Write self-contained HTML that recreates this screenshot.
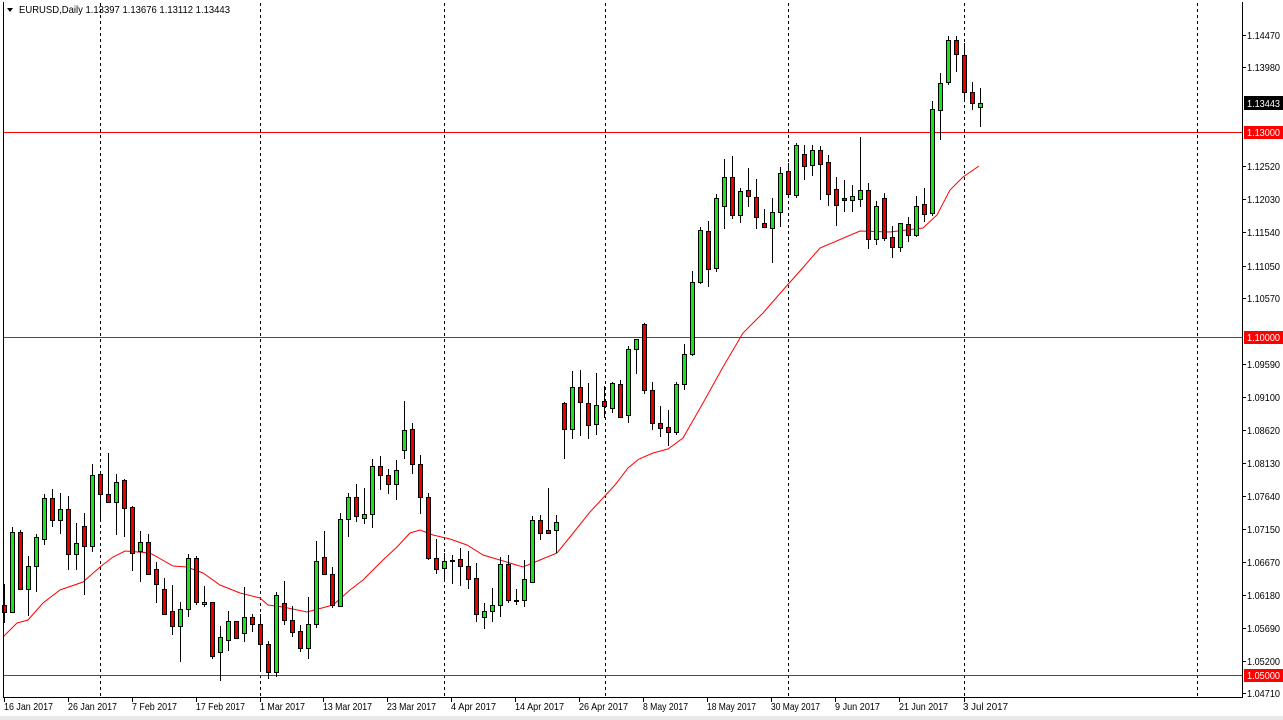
<!DOCTYPE html>
<html><head><meta charset="utf-8">
<style>
html,body{margin:0;padding:0;background:#fff;width:1283px;height:720px;overflow:hidden}
svg{display:block}
text{font-family:"Liberation Sans",sans-serif;font-size:10.5px;fill:#000}
</style></head><body>
<svg id="s" width="1283" height="720" xmlns="http://www.w3.org/2000/svg">
<rect x="0" y="0" width="1283" height="720" fill="#fff"/>
<rect x="0" y="716" width="1283" height="4" fill="#e8e8e8"/>
<g id="grid" stroke="#000" stroke-width="1" stroke-dasharray="3,3">
<line x1="100.5" y1="3" x2="100.5" y2="697"/>
<line x1="260.5" y1="3" x2="260.5" y2="697"/>
<line x1="444.5" y1="3" x2="444.5" y2="697"/>
<line x1="605.5" y1="3" x2="605.5" y2="697"/>
<line x1="788.5" y1="3" x2="788.5" y2="697"/>
<line x1="964.5" y1="3" x2="964.5" y2="697"/>
<line x1="1197.5" y1="3" x2="1197.5" y2="697"/>
</g>
<g stroke="#f00" stroke-width="1">
<line x1="3" y1="132.5" x2="1242" y2="132.5"/>
<line x1="3" y1="337.5" x2="1242" y2="337.5"/>
<line x1="3" y1="675.5" x2="1242" y2="675.5"/>
</g>
<polyline fill="none" stroke="#f00" stroke-width="1" points="3,637 17,623 28,620 43,603 60,590 83,582 100,567 113,557 125,551 150,553 173,566 187,567 203,573 220,585 240,593 260,598 268,605 283,607 307,612 333,605 350,590 363,580 383,560 397,547 410,533 420,530 433,535 450,539 467,545 483,555 500,560 523,567 540,560 557,553 570,537 590,512 615,485 628,468 639,459 653,453 668,449 683,438 703,403 723,367 743,333 763,313 783,290 800,271 820,248 860,231 890,232 923,228 937,215 950,190 963,177 979,166"/>
<g id="candles"></g>
<g fill="none" stroke="#000" stroke-width="1">
<line x1="3.5" y1="2" x2="3.5" y2="697"/>
<line x1="3" y1="697.5" x2="1242" y2="697.5"/>
<line x1="1242.5" y1="2" x2="1242.5" y2="698"/>
</g>
<polygon points="7,8 13,8 10,12" fill="#000"/>
<text x="19" y="13" textLength="211" lengthAdjust="spacingAndGlyphs">EURUSD,Daily  1.13397 1.13676 1.13112 1.13443</text>
<g id="ylab">
<text x="1247" y="39">1.14470</text>
<text x="1247" y="71">1.13980</text>
<text x="1247" y="170">1.12520</text>
<text x="1247" y="203">1.12030</text>
<text x="1247" y="236">1.11540</text>
<text x="1247" y="270">1.11050</text>
<text x="1247" y="302">1.10570</text>
<text x="1247" y="368">1.09590</text>
<text x="1247" y="401">1.09100</text>
<text x="1247" y="434">1.08620</text>
<text x="1247" y="467">1.08130</text>
<text x="1247" y="500">1.07640</text>
<text x="1247" y="533">1.07150</text>
<text x="1247" y="566">1.06670</text>
<text x="1247" y="599">1.06180</text>
<text x="1247" y="632">1.05690</text>
<text x="1247" y="665">1.05200</text>
<text x="1247" y="697">1.04710</text>
<text x="1247" y="107" style="fill:#fff" class="bd">1.13443</text>
</g>
<g stroke="#000">
<line x1="1242" y1="35.5" x2="1246" y2="35.5"/><line x1="1242" y1="67.5" x2="1246" y2="67.5"/>
<line x1="1242" y1="166.5" x2="1246" y2="166.5"/><line x1="1242" y1="199.5" x2="1246" y2="199.5"/>
<line x1="1242" y1="232.5" x2="1246" y2="232.5"/><line x1="1242" y1="266.5" x2="1246" y2="266.5"/>
<line x1="1242" y1="298.5" x2="1246" y2="298.5"/><line x1="1242" y1="364.5" x2="1246" y2="364.5"/>
<line x1="1242" y1="397.5" x2="1246" y2="397.5"/><line x1="1242" y1="430.5" x2="1246" y2="430.5"/>
<line x1="1242" y1="463.5" x2="1246" y2="463.5"/><line x1="1242" y1="496.5" x2="1246" y2="496.5"/>
<line x1="1242" y1="529.5" x2="1246" y2="529.5"/><line x1="1242" y1="562.5" x2="1246" y2="562.5"/>
<line x1="1242" y1="595.5" x2="1246" y2="595.5"/><line x1="1242" y1="628.5" x2="1246" y2="628.5"/>
<line x1="1242" y1="661.5" x2="1246" y2="661.5"/><line x1="1242" y1="693.5" x2="1246" y2="693.5"/>
</g>
<rect x="1244" y="96" width="39" height="14" fill="#000"/>
<text x="1247" y="107" style="fill:#fff" textLength="33" lengthAdjust="spacingAndGlyphs">1.13443</text>
<rect x="1244" y="126" width="39" height="13" fill="#f00"/>
<text x="1247" y="136" style="fill:#fff" textLength="33" lengthAdjust="spacingAndGlyphs">1.13000</text>
<rect x="1244" y="331" width="39" height="13" fill="#f00"/>
<text x="1247" y="341" style="fill:#fff" textLength="33" lengthAdjust="spacingAndGlyphs">1.10000</text>
<rect x="1244" y="669" width="39" height="13" fill="#f00"/>
<text x="1247" y="679" style="fill:#fff" textLength="33" lengthAdjust="spacingAndGlyphs">1.05000</text>
<g id="xlab">
<text x="4" y="710">16 Jan 2017</text>
<text x="68" y="710">26 Jan 2017</text>
<text x="132" y="710">7 Feb 2017</text>
<text x="196" y="710">17 Feb 2017</text>
<text x="260" y="710">1 Mar 2017</text>
<text x="323" y="710">13 Mar 2017</text>
<text x="387" y="710">23 Mar 2017</text>
<text x="451" y="710">4 Apr 2017</text>
<text x="515" y="710">14 Apr 2017</text>
<text x="579" y="710">26 Apr 2017</text>
<text x="643" y="710">8 May 2017</text>
<text x="707" y="710">18 May 2017</text>
<text x="771" y="710">30 May 2017</text>
<text x="835" y="710">9 Jun 2017</text>
<text x="899" y="710">21 Jun 2017</text>
<text x="963" y="710">3 Jul 2017</text>
</g>
<g stroke="#000" id="xt">
<line x1="4.5" y1="697" x2="4.5" y2="702"/><line x1="68.5" y1="697" x2="68.5" y2="702"/>
<line x1="132.5" y1="697" x2="132.5" y2="702"/><line x1="196.5" y1="697" x2="196.5" y2="702"/>
<line x1="260.5" y1="697" x2="260.5" y2="702"/><line x1="323.5" y1="697" x2="323.5" y2="702"/>
<line x1="387.5" y1="697" x2="387.5" y2="702"/><line x1="451.5" y1="697" x2="451.5" y2="702"/>
<line x1="515.5" y1="697" x2="515.5" y2="702"/><line x1="579.5" y1="697" x2="579.5" y2="702"/>
<line x1="643.5" y1="697" x2="643.5" y2="702"/><line x1="707.5" y1="697" x2="707.5" y2="702"/>
<line x1="771.5" y1="697" x2="771.5" y2="702"/><line x1="835.5" y1="697" x2="835.5" y2="702"/>
<line x1="899.5" y1="697" x2="899.5" y2="702"/><line x1="964.5" y1="697" x2="964.5" y2="702"/>
</g>
</svg>
<script>
(function(){
var yl=document.querySelectorAll('#ylab text');
for(var i=0;i<yl.length;i++){if(yl[i].getAttribute('class')=='bd'){yl[i].parentNode.removeChild(yl[i]);continue;}yl[i].setAttribute('textLength','33');yl[i].setAttribute('lengthAdjust','spacingAndGlyphs');}
var xl=document.querySelectorAll('#xlab text');
for(var j=0;j<xl.length;j++){var n=xl[j].textContent.length;xl[j].setAttribute('textLength',String(Math.round(n*4.45)));xl[j].setAttribute('lengthAdjust','spacingAndGlyphs');}
var R=[
 {off:440,d:[
 ['r',495,515,432,548],['g',277,515,262,515],['r',277,446,270,450],['g',379,446,348,527],['g',292,377,282,455],
 ['g',175,298,162,315],['r',175,241,147,260],['g',208,241,158,282],['r',208,341,168,390],['g',310,343,250,390],
 ['r',259,319,220,465],['g',106,317,72,335],['r',103,163,93,240],['r',163,185,40,185],['g',127,185,102,285],
 ['r',121,203,117,290],['r',202,338,198,392],['g',307,333,273,425],['r',307,403,283,403],['r',388,431,365,490],
 ['r',448,523,415,523],['r',514,559,435,585],['g',508,557,487,665],['g',355,508,342,530],['r',355,485,349,495],
 ['g',487,493,438,500],['r',487,647,487,657],['g',592,637,558,722],['g',544,601,513,632],['r',544,593,544,596],
 ['g',532,580,440,605]]},
 {off:390,d:[
 ['r',682,703,672,725],['r',703,763,672,840],['r',763,847,752,868],['g',616,845,605,862],['r',640,690,572,706],
 ['r',691,727,648,740],['r',724,775,705,787],['g',703,775,620,808],['g',514,703,453,713],['r',502,553,423,553],
 ['r',553,645,530,655],['g',388,647,370,650],['g',322,388,308,440],['r',322,379,282,397],['g',373,385,294,401],
 ['g',229,373,207,413],['r',229,256,198,300],['r',256,283,237,313],['g',241,283,210,329],['g',121,181,33,206],
 ['r',118,223,99,253],['r',223,322,195,371],['r',322,505,308,509],['r',505,538,448,551],['g',514,535,490,572],
 ['g',511,514,496,583],['r',508,529,475,587],['r',529,568,484,596],['r',565,673,519,696],['g',664,682,640,718],
 ['g',646,664,595,697],['g',523,646,502,680],['r',523,631,494,640],['g',631,634,596,646],['g',568,631,511,650],
 ['g',391,577,379,580],['r',391,430,376,451],['r',421,430,295,433],['g',397,421,376,488]]},
 {off:140,d:[
 ['r',790,868,787,957],['g',742,868,692,896],['r',742,787,690,887],['r',790,856,729,896],['g',796,853,699,884],
 ['r',784,799,739,835],['g',730,805,727,820],['r',733,830,720,833],['g',628,826,618,848],['g',596,628,596,703],
 ['r',553,751,549,763],['r',751,850,727,871],['r',850,865,798,892],['r',862,875,810,919],['g',733,875,726,886],
 ['g',643,733,613,751],['g',427,643,393,647],['g',271,425,262,431],['r',274,388,243,440],['g',175,385,163,397],
 ['g',112,199,58,266],['r',112,226,48,238],['g',154,226,145,250],['r',151,169,85,200],['r',172,232,118,268],
 ['r',250,262,208,265],['g',217,265,175,370],['g',100,217,82,260],['r',94,163,70,170],['g',16,166,10,175]]},
 {off:30,d:[
 ['r',373,409,345,449],['g',361,406,345,437],['r',361,403,349,509],['r',397,493,376,529],['r',478,526,442,587],
 ['r',505,511,451,547],['g',499,511,466,547],['g',481,508,322,532],['r',481,628,460,656],['g',529,628,514,644],
 ['r',505,625,490,632],['r',622,652,589,683],['g',580,652,580,665],['r',583,616,562,637],['g',529,616,499,620],
 ['r',523,553,475,575],['g',238,550,214,557],['g',160,241,130,331],['g',31,157,18,166],['r',31,73,18,127],
 ['r',76,187,40,212],['r',187,220,157,241],['g',220,232,175,290]]}
];
var out='',k=0;
R.forEach(function(r){r.d.forEach(function(c){
 var cx=4+8*k;k++;
 var bt=Math.round(r.off+c[1]/3),bb=Math.round(r.off+c[2]/3),h=Math.round(r.off+c[3]/3),l=Math.round(r.off+c[4]/3);
 if(bb-bt<1)bb=bt+1;
 out+='<rect x="'+cx+'" y="'+h+'" width="1" height="'+(l-h)+'" fill="#000"/>';
 out+='<rect x="'+(cx-2)+'" y="'+bt+'" width="5" height="'+(bb-bt+1)+'" fill="#000"/>';
 if(bb-bt>=2)out+='<rect x="'+(cx-1)+'" y="'+(bt+1)+'" width="3" height="'+(bb-bt-1)+'" fill="'+(c[0]=='g'?'#1ee01e':'#e80000')+'"/>';
});});
document.getElementById('candles').innerHTML=out;
})();
</script>
</body></html>
